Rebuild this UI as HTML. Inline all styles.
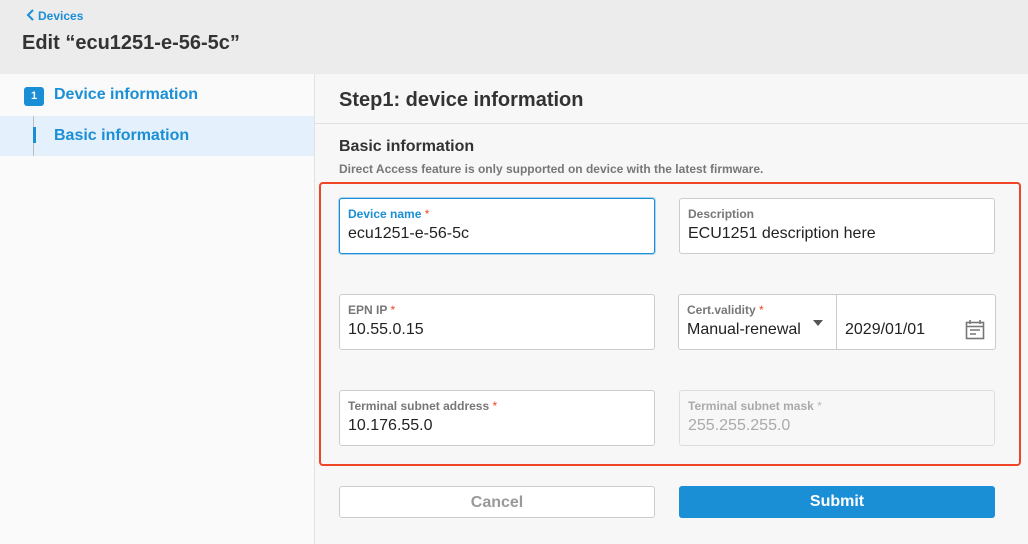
<!DOCTYPE html>
<html><head><meta charset="utf-8"><style>
*{box-sizing:border-box;margin:0;padding:0}
body{width:1028px;height:544px;overflow:hidden;font-family:"Liberation Sans",Arial,sans-serif;background:#f7f7f7;position:relative}
.hdr{position:absolute;left:0;top:0;width:1028px;height:74px;background:#ececec}
.back{position:absolute;left:26px;top:9px;color:#1a8fd6;font-size:12px;font-weight:bold}
.title{position:absolute;left:22px;top:32px;font-size:20px;font-weight:bold;color:#333}
.side{position:absolute;left:0;top:74px;width:315px;height:470px;background:#fafafa;border-right:1px solid #e2e2e2}
.num{position:absolute;left:24px;top:87px;width:20px;height:19px;background:#1a8fd6;border-radius:3px;color:#fff;font-size:11px;font-weight:bold;text-align:center;line-height:19px}
.s1{position:absolute;left:54px;top:86px;color:#1a8fd6;font-size:16px;font-weight:bold}
.sel{position:absolute;left:0;top:116px;width:314px;height:40px;background:#e4f0fb}
.vline{position:absolute;left:33px;top:116px;width:1px;height:40px;background:#bbb}
.bar{position:absolute;left:33px;top:127px;width:3px;height:16px;background:#1a8fd6}
.s2{position:absolute;left:54px;top:127px;color:#1a8fd6;font-size:16px;font-weight:bold}
.step{position:absolute;left:315px;top:74px;width:713px;height:50px;border-bottom:1px solid #e2e2e2}
.step span{position:absolute;left:24px;top:15px;font-size:20px;font-weight:bold;color:#333}
.bi{position:absolute;left:339px;top:138px;font-size:16px;font-weight:bold;color:#333}
.note{position:absolute;left:339px;top:162px;font-size:12px;font-weight:bold;color:#777}
.red{position:absolute;left:319px;top:182px;width:702px;height:284px;border:2px solid #ee4527;border-radius:4px}
.f{position:absolute;height:56px;background:#fff;border:1px solid #ccc;border-radius:3px}
.f .l{position:absolute;left:8px;top:8px;font-size:12px;font-weight:bold;color:#777}
.f .l b{color:#ee4527;font-weight:normal}
.f .v{position:absolute;left:8px;top:26px;font-size:16px;color:#222}
.foc{border:1px solid #1a8fd6;box-shadow:0 0 0 1px #a9d3f0}
.foc .l{color:#1a8fd6}
.dis{background:#f7f7f7;border-color:#ddd}
.dis .l,.dis .v{color:#aaa}.dis .l b{color:#bbb}
.btn{position:absolute;top:486px;width:316px;height:32px;border-radius:3px;font-size:16px;font-weight:bold;text-align:center;line-height:31px}
</style></head><body>
<div class="hdr"></div>
<div class="back"><svg width="9" height="12" viewBox="0 0 9 12" style="vertical-align:-1px;margin-right:3px"><path d="M7 1L2 6l5 5" fill="none" stroke="#1a8fd6" stroke-width="2"/></svg>Devices</div>
<div class="title">Edit “ecu1251-e-56-5c”</div>
<div class="side"></div>
<div class="num">1</div><div class="s1">Device information</div>
<div class="sel"></div><div class="vline"></div><div class="bar"></div><div class="s2">Basic information</div>
<div class="step"><span>Step1: device information</span></div>
<div class="bi">Basic information</div>
<div class="note">Direct Access feature is only supported on device with the latest firmware.</div>
<div class="red"></div>
<div class="f foc" style="left:339px;top:198px;width:316px"><div class="l">Device name <b>*</b></div><div class="v">ecu1251-e-56-5c</div></div>
<div class="f" style="left:679px;top:198px;width:316px"><div class="l">Description</div><div class="v">ECU1251 description here</div></div>
<div class="f" style="left:339px;top:294px;width:316px"><div class="l">EPN IP <b>*</b></div><div class="v">10.55.0.15</div></div>
<div class="f" style="left:678px;top:294px;width:318px">
<div class="l">Cert.validity <b>*</b></div><div class="v">Manual-renewal</div>
<svg style="position:absolute;left:134px;top:25px" width="10" height="6"><path d="M0 0h10L5 6z" fill="#555"/></svg>
<div style="position:absolute;left:157px;top:0;width:1px;height:54px;background:#ccc"></div>
<div class="v" style="left:166px">2029/01/01</div>
<svg style="position:absolute;left:286px;top:24px" width="20" height="21" viewBox="0 0 20 21"><rect x="1.5" y="3.5" width="17" height="16" fill="none" stroke="#777" stroke-width="1.6"/><path d="M1.5 7.5h17M5 1v4M15 1v4M5 11h10M5 15h6" stroke="#777" stroke-width="1.6"/></svg>
</div>
<div class="f" style="left:339px;top:390px;width:316px"><div class="l">Terminal subnet address <b>*</b></div><div class="v">10.176.55.0</div></div>
<div class="f dis" style="left:679px;top:390px;width:316px"><div class="l">Terminal subnet mask <b>*</b></div><div class="v">255.255.255.0</div></div>
<div class="btn" style="left:339px;background:#fff;border:1px solid #ccc;color:#999">Cancel</div>
<div class="btn" style="left:679px;background:#1a8fd6;color:#fff">Submit</div>
</body></html>
